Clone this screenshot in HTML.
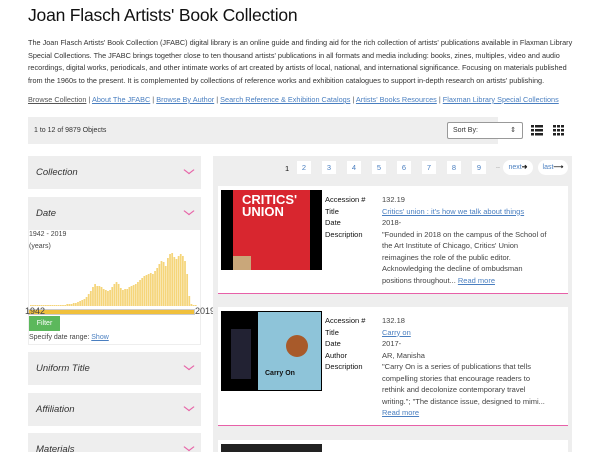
<!DOCTYPE html>
<html><head><meta charset="utf-8"><style>
*{margin:0;padding:0;box-sizing:border-box}
html,body{width:600px;height:452px;overflow:hidden}
body{background:#fff;font-family:"Liberation Sans",sans-serif;color:#222;position:relative}
.a{position:absolute}
h1{position:absolute;left:28px;top:5px;font-size:17.5px;font-weight:normal;color:#111;letter-spacing:-0.2px}
.p{left:28px;top:37px;width:548px;font-size:7.3px;line-height:12.6px;color:#333}
.links{left:28px;top:95px;font-size:7.3px;color:#555;white-space:nowrap}
.links u{color:#4a7fc0}
.bar{left:28px;top:117px;width:470px;height:27px;background:#eee}
.box{position:absolute;left:28px;width:173px;height:33px;background:#eee;font-style:italic;font-size:9.5px;color:#333;padding:11px 0 0 8px}
.chev{position:absolute;right:9px;top:11px;width:6px;height:6px;border-right:1.2px solid #e766a8;border-bottom:1.2px solid #e766a8;transform:scaleX(1.3) rotate(45deg)}
.main{left:213px;top:156px;width:359px;height:296px;background:#eee}
.pg{position:absolute;top:161px;width:14px;height:13px;background:#fff;color:#4a7fc0;font-size:7.5px;text-align:center;line-height:13px}
.card{position:absolute;left:218px;width:350px;background:#fff;border-bottom:1.5px solid #e760a8}
.lab{position:absolute;left:107px;font-size:7.5px;line-height:11.5px;color:#111}
.val{position:absolute;left:164px;font-size:7.5px;line-height:11.5px;color:#444;width:165px}
.val u{color:#4a7fc0}
</style></head><body>
<h1>Joan Flasch Artists' Book Collection</h1>
<div class="a p">The Joan Flasch Artists' Book Collection (JFABC) digital library is an online guide and finding aid for the rich collection of artists' publications available in Flaxman Library Special Collections. The JFABC brings together close to ten thousand artists' publications in all formats and media including: books, zines, multiples, video and audio recordings, digital works, periodicals, and other intimate works of art created by artists of local, national, and international significance. Focusing on materials published from the 1960s to the present. It is complemented by collections of reference works and exhibition catalogues to support in-depth research on artists' publishing.</div>
<div class="a links"><u style="color:#555">Browse Collection</u> | <u>About The JFABC</u> | <u>Browse By Author</u> | <u>Search Reference &amp; Exhibition Catalogs</u> | <u>Artists' Books Resources</u> | <u>Flaxman Library Special Collections</u></div>
<div class="a bar"></div>
<div class="a" style="left:34px;top:127px;font-size:7px;color:#333">1 to 12 of 9879 Objects</div>
<div class="a" style="left:447px;top:122px;width:76px;height:17px;background:#fff;border:1px solid #999;border-radius:2px;font-size:7px;padding:4px 0 0 5px;color:#333">Sort By:<span style="position:absolute;right:6px;top:3px;font-size:7px">&#8661;</span></div>
<svg class="a" style="left:531px;top:125px" width="40" height="11"><g fill="#222"><rect x="0" y="0" width="3" height="2.5"/><rect x="4" y="0" width="8" height="2.5"/><rect x="0" y="4" width="3" height="2.5"/><rect x="4" y="4" width="8" height="2.5"/><rect x="0" y="8" width="3" height="2.5"/><rect x="4" y="8" width="8" height="2.5"/>
<rect x="22" y="0" width="3" height="2.5"/><rect x="26" y="0" width="3" height="2.5"/><rect x="30" y="0" width="3" height="2.5"/><rect x="22" y="4" width="3" height="2.5"/><rect x="26" y="4" width="3" height="2.5"/><rect x="30" y="4" width="3" height="2.5"/><rect x="22" y="8" width="3" height="2.5"/><rect x="26" y="8" width="3" height="2.5"/><rect x="30" y="8" width="3" height="2.5"/></g></svg>

<div class="box" style="top:156px">Collection<div class="chev"></div></div>
<div class="box" style="top:197px;height:32px">Date<div class="chev"></div></div>
<div class="a" style="left:28px;top:229px;width:173px;height:116px;background:#fff;border:1px solid #eee"></div>
<div class="a" style="left:29px;top:229px;font-size:7px;color:#444;line-height:11.5px">1942 - 2019<br>(years)</div>
<svg class="a" id="hist" style="left:30px;top:250px" width="168" height="57"></svg>
<div class="a" style="left:28px;top:309px;width:167px;height:6px;background:#f0c03c;border:1px solid #ccc"></div>
<div class="a" style="left:25px;top:306px;font-size:9px;color:#444">1942</div>
<div class="a" style="left:195px;top:306px;font-size:9px;color:#444">2019</div>
<div class="a" style="left:29px;top:316px;width:31px;height:15px;background:#5cb85c;color:#fff;font-size:7px;text-align:center;line-height:15px">Filter</div>
<div class="a" style="left:29px;top:334px;font-size:7px;color:#444">Specify date range: <u style="color:#4a7fc0">Show</u></div>
<div class="box" style="top:352px">Uniform Title<div class="chev"></div></div>
<div class="box" style="top:393px">Affiliation<div class="chev"></div></div>
<div class="box" style="top:433px">Materials<div class="chev"></div></div>

<div class="a main"></div>
<div class="a" style="left:285px;top:164px;font-size:7.5px;color:#111">1</div>
<div class="pg" style="left:297px">2</div><div class="pg" style="left:322px">3</div><div class="pg" style="left:347px">4</div><div class="pg" style="left:372px">5</div><div class="pg" style="left:397px">6</div><div class="pg" style="left:422px">7</div><div class="pg" style="left:447px">8</div><div class="pg" style="left:472px">9</div>
<div class="a" style="left:496px;top:163px;font-size:7px;color:#777">..</div>
<div class="a" style="left:503px;top:160px;width:30px;height:15px;border-radius:8px;background:#fff;color:#4a7fc0;font-size:7px;text-align:center;line-height:15px">next<b style="color:#222">&#10140;</b></div>
<div class="a" style="left:538px;top:160px;width:30px;height:15px;border-radius:8px;background:#fff;color:#4a7fc0;font-size:7px;text-align:center;line-height:15px">last<b style="color:#222">&#10230;</b></div>

<div class="card" style="top:186px;height:108px">
 <div class="a" style="left:3px;top:4px;width:101px;height:80px;background:#000">
  <div class="a" style="left:12px;top:0;width:77px;height:80px;background:#d8262f"></div>
  <div class="a" style="left:21px;top:4px;color:#fff;font-weight:bold;font-size:13px;line-height:12px">CRITICS'<br>UNION</div>
  <div class="a" style="left:12px;top:66px;width:18px;height:14px;background:#c9a77a"></div>
 </div>
 <div class="lab" style="top:8px">Accession #<br>Title<br>Date<br>Description</div>
 <div class="val" style="top:8px">132.19<br><u>Critics' union : it's how we talk about things</u><br>2018-<br>"Founded in 2018 on the campus of the School of the Art Institute of Chicago, Critics' Union reimagines the role of the public editor. Acknowledging the decline of ombudsman positions throughout... <u>Read more</u></div>
</div>

<div class="card" style="top:307px;height:119px">
 <div class="a" style="left:3px;top:4px;width:101px;height:80px;background:#000">
  <div class="a" style="left:37px;top:1px;width:63px;height:78px;background:#8ec4d9"></div>
  <div class="a" style="left:10px;top:18px;width:20px;height:50px;background:#223"></div>
  <div class="a" style="left:65px;top:24px;width:22px;height:22px;border-radius:50%;background:#a85a2a"></div>
  <div class="a" style="left:44px;top:59px;font-size:7px;font-weight:bold;color:#111">Carry On</div>
 </div>
 <div class="lab" style="top:8px">Accession #<br>Title<br>Date<br>Author<br>Description</div>
 <div class="val" style="top:8px">132.18<br><u>Carry on</u><br>2017-<br>AR, Manisha<br>"Carry On is a series of publications that tells compelling stories that encourage readers to rethink and decolonize contemporary travel writing."; "The distance issue, designed to mimi...<br><u>Read more</u></div>
</div>

<div class="card" style="top:440px;height:12px;border:none">
 <div class="a" style="left:3px;top:4px;width:101px;height:8px;background:#222"></div>
</div>
<script>
var h=[1,1,1,1,1,1,1,1,1,1,1,1,1,1,1,1,1,2,2,2,3,3,4,5,6,7,9,12,15,19,22,20,20,19,17,16,15,16,19,22,24,22,18,16,17,17,19,20,21,22,24,26,28,30,31,32,33,32,35,38,42,45,44,40,48,52,53,49,47,50,52,50,45,32,10,2,1,1];
var s='',w=167/h.length;
for(var i=0;i<h.length;i++){s+='<rect x="'+(i*w).toFixed(2)+'" y="'+(56-h[i])+'" width="'+(w-0.4).toFixed(2)+'" height="'+h[i]+'" fill="#f5d57a"/>';}
document.getElementById('hist').innerHTML=s;
</script>
</body></html>
